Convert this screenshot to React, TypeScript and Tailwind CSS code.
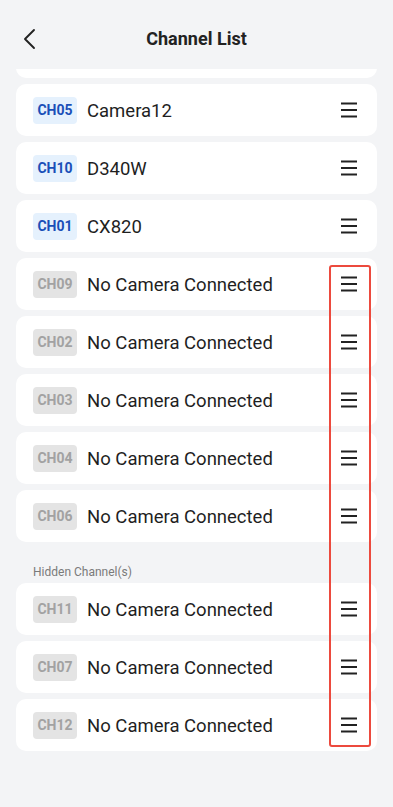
import React from 'react';

type Channel = { ch: string; name: string; active: boolean };

const visible: Channel[] = [
  { ch: 'CH05', name: 'Camera12', active: true },
  { ch: 'CH10', name: 'D340W', active: true },
  { ch: 'CH01', name: 'CX820', active: true },
  { ch: 'CH09', name: 'No Camera Connected', active: false },
  { ch: 'CH02', name: 'No Camera Connected', active: false },
  { ch: 'CH03', name: 'No Camera Connected', active: false },
  { ch: 'CH04', name: 'No Camera Connected', active: false },
  { ch: 'CH06', name: 'No Camera Connected', active: false },
];

const hidden: Channel[] = [
  { ch: 'CH11', name: 'No Camera Connected', active: false },
  { ch: 'CH07', name: 'No Camera Connected', active: false },
  { ch: 'CH12', name: 'No Camera Connected', active: false },
];

const DragHandle = () => (
  <svg width="18" height="16" viewBox="0 0 18 16" fill="none">
    <path d="M1 1.5h16M1 8h16M1 14.5h16" stroke="#222" strokeWidth="1.8" />
  </svg>
);

const ChannelRow = ({ item }: { item: Channel }) => (
  <div className="h-[52px] bg-white rounded-[10px] flex items-center pl-[17px] pr-[19px]">
    <div
      className={`w-[44px] h-[27px] rounded-[4px] flex items-center justify-center text-[14px] font-bold ${
        item.active ? 'bg-[#e5f1fd] text-[#1a4fb8]' : 'bg-[#e4e4e4] text-[#a2a2a2]'
      }`}
    >
      {item.ch}
    </div>
    <div className="ml-[10px] flex-1 text-[18.5px] leading-[22px] pt-[2px] text-[#1f1f1f]">{item.name}</div>
    <DragHandle />
  </div>
);

export default function App() {
  return (
    <div className="relative w-[393px] h-[807px] bg-[#f3f4f6] overflow-hidden" style={{ fontFamily: 'Roboto, "Noto Sans", sans-serif' }}>
      <div className="h-[69px] flex items-start relative px-[21px] pt-[28px]">
        <svg width="18" height="22" viewBox="0 0 18 22" fill="none">
          <path d="M13 2L4 11l9 9" stroke="#222" strokeWidth="1.9" strokeLinecap="round" strokeLinejoin="round" />
        </svg>
        <div className="absolute left-0 right-0 top-[28px] leading-[22px] text-center text-[18px] font-bold text-[#222] pointer-events-none">
          Channel List
        </div>
      </div>

      <div className="px-[16px]">
        <div className="h-[9px] overflow-hidden">
          <div className="h-[52px] bg-white rounded-[10px] -mt-[43px]" />
        </div>
        <div className="flex flex-col gap-[6px] mt-[6px]">
          {visible.map((c) => (
            <ChannelRow key={c.ch} item={c} />
          ))}
        </div>
        <div className="h-[41px] pl-[17px] pt-[21px] text-[12px] text-[#7a7a7a]">Hidden Channel(s)</div>
        <div className="flex flex-col gap-[6px]">
          {hidden.map((c) => (
            <ChannelRow key={c.ch} item={c} />
          ))}
        </div>
      </div>

      <div className="absolute left-[329px] top-[265px] w-[42px] h-[482px] border-[2.5px] border-[#ec4a3e] rounded-[3px] pointer-events-none" />
    </div>
  );
}
